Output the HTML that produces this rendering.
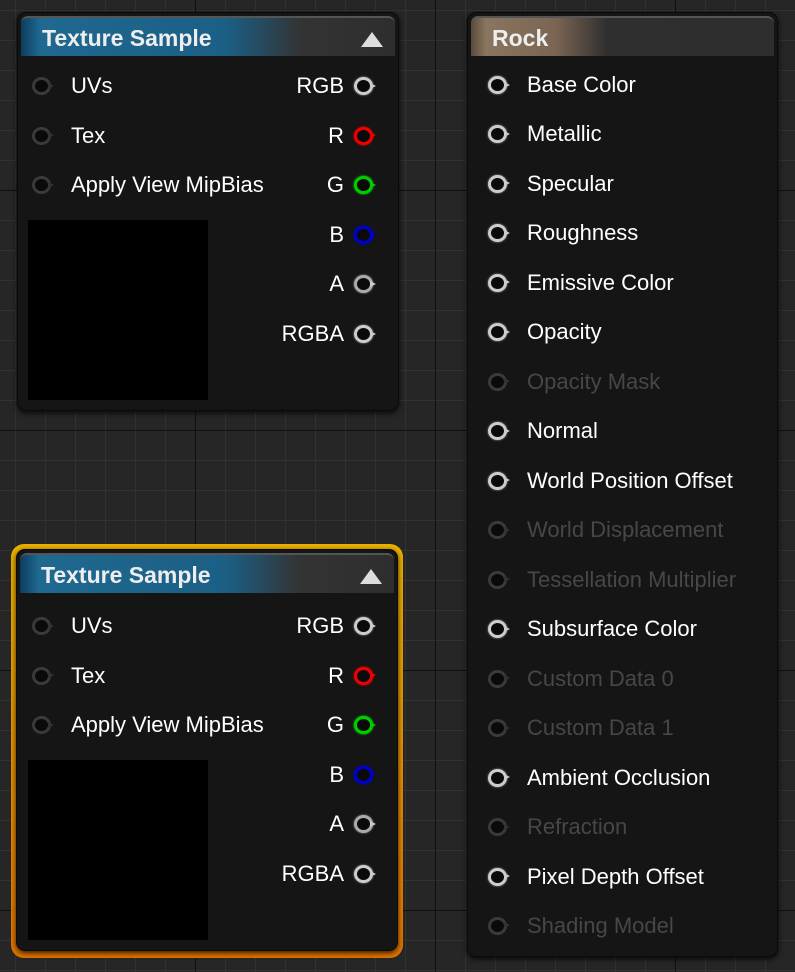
<!DOCTYPE html>
<html><head><meta charset="utf-8"><style>
*{margin:0;padding:0;box-sizing:border-box}
html,body{width:795px;height:972px;overflow:hidden}
body{position:relative;background-color:#262626;
background-image:
linear-gradient(90deg,#101010 0 1px,transparent 1px),
linear-gradient(0deg,transparent 239px,#101010 239px),
linear-gradient(90deg,#323232 0 1px,transparent 1px),
linear-gradient(0deg,transparent 29px,#323232 29px);
background-size:240px 240px,240px 240px,30px 30px,30px 30px;
background-position:195px 0,0 190px,15px 0,0 10px;
font-family:"Liberation Sans",sans-serif;color:#fff}
.node{position:absolute;background:#141514;border-radius:9px;box-shadow:0 2px 6px rgba(0,0,0,.8);border:1px solid #0a0a0a}
.hdr{position:absolute;left:3px;right:3px;top:3px;height:40px;border-radius:7px 7px 0 0;font-weight:bold;font-size:23px;line-height:40px;padding-left:21px;color:#eee;border-top:2px solid #555}
.blue{background:linear-gradient(90deg,#0d3d5e 0,#1f6890 5%,#1b5f85 55%,#333 75%,#2e2e2e 100%)}
.rock{background:linear-gradient(90deg,#5a4a3a 0,#8a7560 5%,#7a6552 28%,#2f2f2f 45%,#2e2e2e 100%)}
.tri{position:absolute;right:12px;top:14px;width:0;height:0;border-left:11px solid transparent;border-right:11px solid transparent;border-bottom:15px solid #ddd}
.t{position:absolute;font-size:22px;line-height:24px;white-space:nowrap}
.r{text-align:right}
.dis{color:#474747}
.pin{position:absolute;width:19px;height:18px;border-radius:50%;border:3.5px solid #ccc;background:#0a0a0a;box-shadow:0 0 2px #999}
.pin:after{content:"";position:absolute;left:13px;top:2.5px;border-top:3.5px solid transparent;border-bottom:3.5px solid transparent;border-left:6px solid #ccc}
.pin.in,.pin.d{border-color:#3a3a3a;box-shadow:none}
.pin.in:after,.pin.d:after{border-left-color:#333}
.pin.red{border-color:#e00;box-shadow:0 0 2px #f00}.pin.red:after{border-left-color:#e00}
.pin.grn{border-color:#0c0;box-shadow:0 0 2px #0f0}.pin.grn:after{border-left-color:#0c0}
.pin.blu{border-color:#00c;box-shadow:0 0 2px #00f}.pin.blu:after{border-left-color:#00c}
.pin.a{border-color:#aaa}
.prev{position:absolute;background:#000;width:180px;height:180px}
.sel{position:absolute;left:11px;top:544px;width:392px;height:414px;border-radius:13px;background:linear-gradient(#eab000,#e07400)}
</style></head><body>

<div class="node" style="left:17px;top:12px;width:382px;height:399px">
<div class="hdr blue">Texture Sample<div class="tri"></div></div>
</div>
<div class="prev" style="left:28px;top:220px"></div>

<div class="sel"></div>
<div class="node" style="left:16px;top:549px;width:382px;height:402px">
<div class="hdr blue">Texture Sample<div class="tri"></div></div>
</div>
<div class="prev" style="left:28px;top:760px"></div>

<div class="node" style="left:467px;top:12px;width:311px;height:945px">
<div class="hdr rock">Rock</div>
</div>

<div id="c"></div>
<script>
var h='';
function tex(y0){
 var ins=['UVs','Tex','Apply View MipBias'];
 for(var i=0;i<3;i++){var y=y0+i*49.6;
  h+='<div class="pin in" style="left:32px;top:'+(y-9)+'px"></div><div class="t" style="left:71px;top:'+(y-12)+'px">'+ins[i]+'</div>';}
 var outs=[['RGB',''],['R','red'],['G','grn'],['B','blu'],['A','a'],['RGBA','']];
 for(var i=0;i<6;i++){var y=y0+i*49.6;
  h+='<div class="pin '+outs[i][1]+'" style="left:354px;top:'+(y-9)+'px"></div><div class="t r" style="right:451px;top:'+(y-12)+'px">'+outs[i][0]+'</div>';}
}
tex(86);tex(626);
var rk=[['Base Color',1],['Metallic',1],['Specular',1],['Roughness',1],['Emissive Color',1],['Opacity',1],['Opacity Mask',0],['Normal',1],['World Position Offset',1],['World Displacement',0],['Tessellation Multiplier',0],['Subsurface Color',1],['Custom Data 0',0],['Custom Data 1',0],['Ambient Occlusion',1],['Refraction',0],['Pixel Depth Offset',1],['Shading Model',0]];
for(var i=0;i<rk.length;i++){var y=85+i*49.47;
 h+='<div class="pin'+(rk[i][1]?'':' d')+'" style="left:488px;top:'+(y-9)+'px"></div><div class="t'+(rk[i][1]?'':' dis')+'" style="left:527px;top:'+(y-12)+'px">'+rk[i][0]+'</div>';}
document.getElementById('c').innerHTML=h;
</script>
</body></html>
